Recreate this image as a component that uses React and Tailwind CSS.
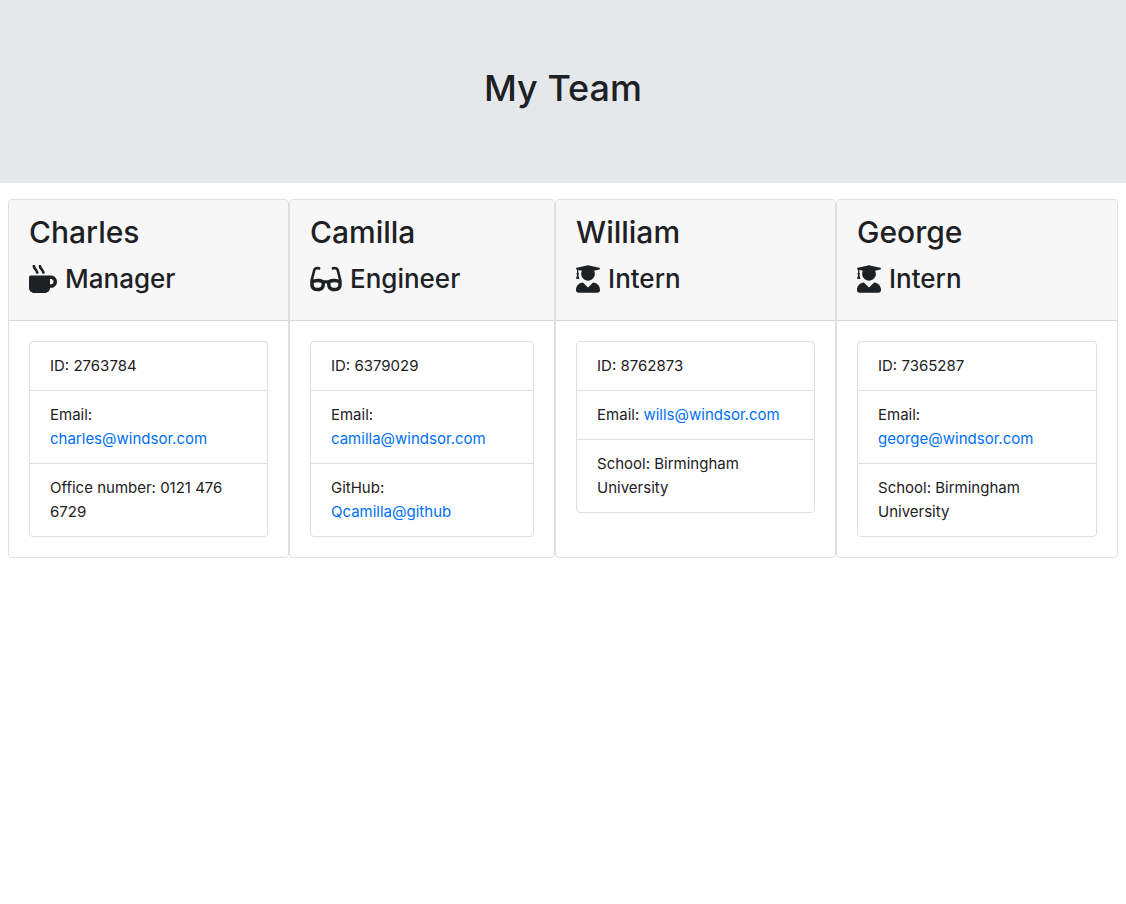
import React from "react";
import { FaMugHot, FaGlasses, FaUserGraduate } from "react-icons/fa";

const team = [
  {
    name: "Charles",
    role: "Manager",
    Icon: FaMugHot,
    iconWidth: "w-7",
    width: "grow-[281]",
    id: "2763784",
    email: "charles@windsor.com",
    label: "Office number",
    value: "0121 476 6729",
  },
  {
    name: "Camilla",
    role: "Engineer",
    Icon: FaGlasses,
    iconWidth: "w-8",
    width: "grow-[266]",
    id: "6379029",
    email: "camilla@windsor.com",
    label: "GitHub",
    value: "Qcamilla@github",
    href: "https://github.com/Qcamilla",
  },
  {
    name: "William",
    role: "Intern",
    Icon: FaUserGraduate,
    iconWidth: "w-6",
    width: "grow-[281]",
    id: "8762873",
    email: "wills@windsor.com",
    label: "School",
    value: "Birmingham University",
  },
  {
    name: "George",
    role: "Intern",
    Icon: FaUserGraduate,
    iconWidth: "w-6",
    width: "grow-[282]",
    id: "7365287",
    email: "george@windsor.com",
    label: "School",
    value: "Birmingham University",
  },
];

function MemberCard({ name, role, Icon, iconWidth, width, id, email, label, value, href }) {
  return (
    <article className={`flex min-w-0 basis-0 flex-col rounded border border-[#dfdfdf] bg-white ${width}`}>
      <header className="rounded-t border-b border-[#d8d8d8] bg-[#f7f7f7] px-5 pt-3 pb-[22px]">
        <h2 className="mb-2 text-[30px] leading-10 font-medium">{name}</h2>
        <h3 className="flex items-center gap-2 text-[26px] leading-[38px] font-medium">
          <Icon aria-hidden="true" className={`h-7 shrink-0 ${iconWidth}`} />
          {role}
        </h3>
      </header>
      <div className="p-5">
        <ul className="divide-y divide-[#dfdfdf] rounded border border-[#dfdfdf]">
          <li className="px-5 py-3">ID: {id}</li>
          <li className="px-5 py-3">
            Email: <a className="text-[#0070f5] hover:underline" href={`mailto:${email}`}>{email}</a>
          </li>
          <li className="px-5 py-3">
            {href ? (
              <>
                {label}: <a className="block text-[#0070f5] hover:underline" href={href}>{value}</a>
              </>
            ) : (
              `${label}: ${value}`
            )}
          </li>
        </ul>
      </div>
    </article>
  );
}

export default function App() {
  return (
    <div className="min-h-screen bg-white font-['Inter',sans-serif] text-[15px] leading-6 text-[#1d2124]">
      <header className="mb-4 bg-[#e4e8eb] px-8 pt-16 pb-[71px]">
        <h1 className="text-center text-4xl leading-[48px] font-medium">My Team</h1>
      </header>
      <main className="flex px-2">
        {team.map((member) => (
          <MemberCard key={member.name} {...member} />
        ))}
      </main>
    </div>
  );
}
